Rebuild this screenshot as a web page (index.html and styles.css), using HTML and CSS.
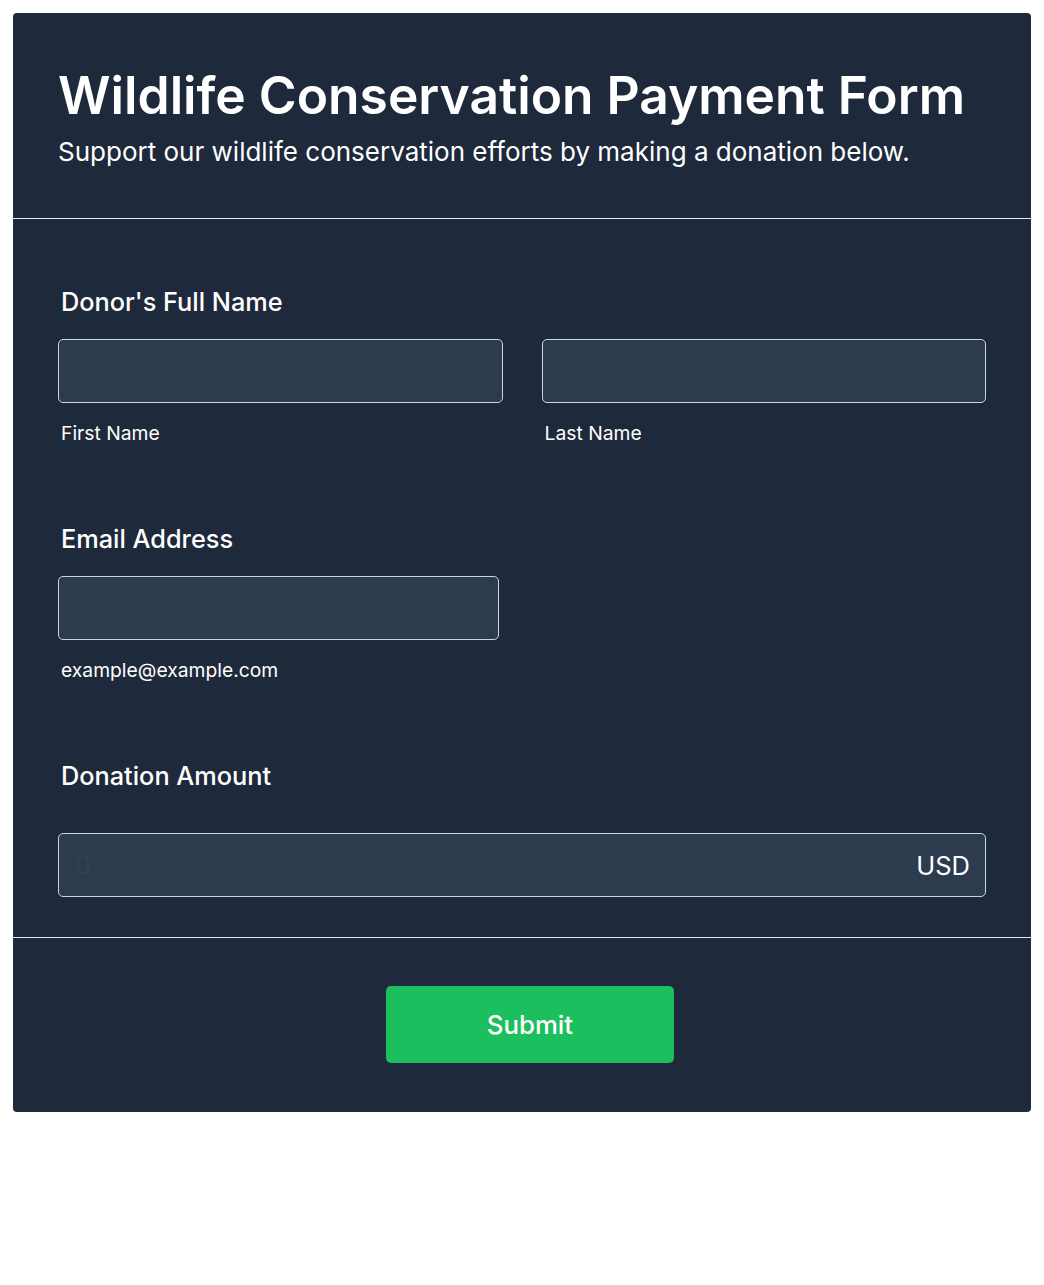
FILE: index.html
```html
<!DOCTYPE html>
<html lang="en">
<head>
    <meta charset="UTF-8">
    <meta name="viewport" content="width=device-width, initial-scale=1.0">
    <title>Wildlife Conservation Payment Form</title>
    <link rel="stylesheet" href="styles.css">
</head>
<body>

    <form class="card" onsubmit="return false;">

        <!-- Header -->
        <div class="form-header">
            <h1>Wildlife Conservation Payment Form</h1>
            <p>Support our wildlife conservation efforts by making a donation below.</p>
        </div>

        <!-- Fields -->
        <div class="form-body">
            <div class="field">
                <label class="field-label">Donor's Full Name</label>
                <div class="name-row">
                    <div class="name-col">
                        <input type="text" class="text-input">
                        <span class="sub-label">First Name</span>
                    </div>
                    <div class="name-col">
                        <input type="text" class="text-input">
                        <span class="sub-label">Last Name</span>
                    </div>
                </div>
            </div>

            <div class="field">
                <label class="field-label">Email Address</label>
                <div class="email-col">
                    <input type="email" class="text-input">
                    <span class="sub-label">example@example.com</span>
                </div>
            </div>

            <div class="field amount-field">
                <label class="field-label">Donation Amount</label>
                <div class="amount-box">
                    <input type="number" class="amount-input" placeholder="0">
                    <span class="currency">USD</span>
                </div>
            </div>
        </div>

        <!-- Footer -->
        <div class="form-footer">
            <button type="submit">Submit</button>
        </div>
    </form>

</body>
</html>
```

FILE: styles.css
```css
body {
    margin: 0;
    padding: 13px;
    background-color: #ffffff;
    font-family: 'Inter', 'Noto Sans', sans-serif;
}
.card {
    background-color: #1e293b;
    border-radius: 4px;
    color: #ffffff;
}
.form-header {
    padding: 51px 45px 49px;
    border-bottom: 1px solid #e2e8f0;
}
.form-header h1 {
    margin: 0;
    font-size: 51.5px;
    font-weight: 600;
    line-height: 62px;
}
.form-header p {
    margin: 9px 0 0;
    font-size: 26px;
    line-height: 34px;
}
.form-body {
    padding: 65px 45px 40px;
    border-bottom: 1px solid #e2e8f0;
}
.field {
    margin-bottom: 75px;
}
.field:last-child {
    margin-bottom: 0;
}
.field-label {
    display: block;
    margin-left: 3px;
    font-size: 25.3px;
    font-weight: 500;
    line-height: 36px;
    margin-bottom: 19px;
}
.name-row {
    display: flex;
    gap: 39px;
}
.name-col {
    flex: 1;
    display: flex;
    flex-direction: column;
}
.email-col {
    width: 441px;
    display: flex;
    flex-direction: column;
}
.text-input {
    box-sizing: border-box;
    width: 100%;
    height: 64px;
    background-color: #2d3b4f;
    border: 1px solid #cbd5e1;
    border-radius: 5px;
    color: #ffffff;
    font-family: inherit;
    font-size: 20px;
    padding: 0 16px;
}
.sub-label {
    margin: 17px 0 0 3px;
    font-size: 19.3px;
    line-height: 26px;
}
.amount-field .field-label {
    margin-bottom: 39px;
}
.amount-box {
    display: flex;
    align-items: center;
    height: 64px;
    box-sizing: border-box;
    background-color: #2d3b4f;
    border: 1px solid #cbd5e1;
    border-radius: 5px;
    padding: 0 15px 0 16px;
}
.amount-input {
    flex: 1;
    background: transparent;
    border: none;
    outline: none;
    color: #ffffff;
    font-family: inherit;
    font-size: 25px;
    padding: 0;
}
.amount-input::placeholder {
    color: #334155;
}
.currency {
    font-size: 25.5px;
}
.form-footer {
    padding: 48px 0 49px 16px;
    display: flex;
    justify-content: center;
}
button {
    width: 288px;
    height: 77px;
    background-color: #1bbf5e;
    color: #ffffff;
    font-family: inherit;
    font-size: 25.8px;
    font-weight: 500;
    border: none;
    border-radius: 5px;
    cursor: pointer;
}
```
